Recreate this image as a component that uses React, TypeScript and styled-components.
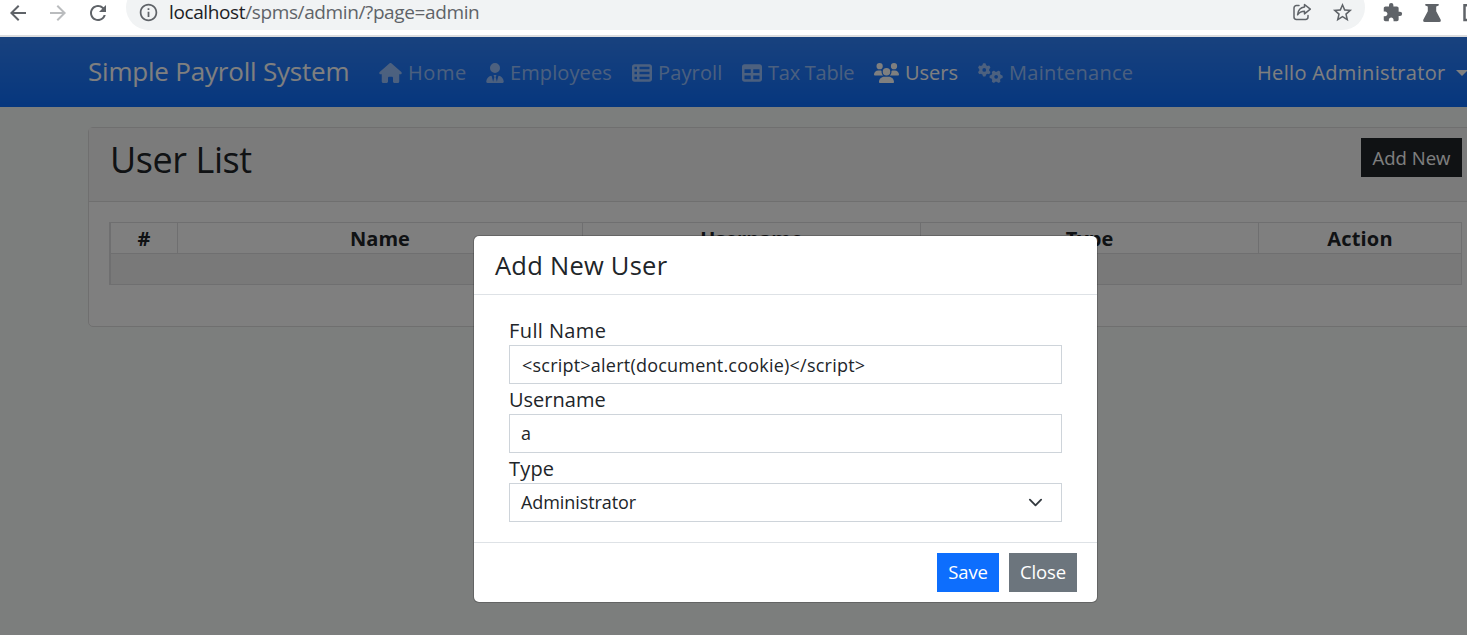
import React from "react";
import styled, { createGlobalStyle } from "styled-components";
import { FaHouse, FaUserTie, FaTableList, FaTable, FaUsers, FaGears } from "react-icons/fa6";
import { MdArrowBack, MdArrowForward, MdRefresh, MdInfoOutline, MdStarBorder, MdExtension } from "react-icons/md";

const Global = createGlobalStyle`
  * { box-sizing: border-box; }
  body { margin: 0; background: #fff; overflow: hidden; }
  body, input, button { font-family: "Open Sans", "Noto Sans", sans-serif; }
`;

const Screen = styled.div`
  width: 1467px;
  height: 635px;
  display: flex;
  flex-direction: column;
  overflow: hidden;
  color: #212529;
`;

const Text = styled.span<{ $ls?: number }>`
  letter-spacing: ${(p) => p.$ls ?? 0}px;
  white-space: nowrap;
`;

const BrowserBar = styled.header`
  height: 37px;
  flex: none;
  display: flex;
  align-items: flex-start;
  background: #fff;
  border-bottom: 2px solid #dcdddf;
  color: #5f6368;
`;

const BarIcon = styled.span<{ $gap: number; $top?: number; $dim?: boolean }>`
  display: flex;
  flex: none;
  margin-left: ${(p) => p.$gap}px;
  padding-top: ${(p) => p.$top ?? 1}px;
  color: ${(p) => (p.$dim ? "#babcbe" : "#5f6368")};
`;

const AddressBar = styled.div`
  flex: none;
  width: 1239px;
  height: 45px;
  margin: -15px 0 0 16px;
  padding: 15px 11px 0 11px;
  display: flex;
  align-items: flex-start;
  border-radius: 23px;
  background: #f1f3f4;
`;

const Url = styled.div`
  flex: 1;
  padding-left: 10px;
  font-size: 19px;
  line-height: 25px;
  b { font-weight: 400; color: #202124; }
`;

const Page = styled.div`
  position: relative;
  flex: 1;
  background: #f8fcfa;
`;

const Navbar = styled.nav`
  height: 70px;
  display: flex;
  align-items: center;
  padding-left: 88px;
  background: #0d6efd linear-gradient(180deg, rgba(255, 255, 255, 0.15), rgba(255, 255, 255, 0));
  font-size: 20px;
`;

const Brand = styled.div`
  width: 291px;
  padding-bottom: 2px;
  font-size: 26px;
  color: #fff;
`;

const NavItem = styled.a<{ $w: number; $icon: number; $active?: boolean }>`
  width: ${(p) => p.$w}px;
  flex: none;
  margin-right: 20px;
  padding-top: 2px;
  display: flex;
  align-items: center;
  gap: 6px;
  color: ${(p) => (p.$active ? "#fff" : "rgba(255, 255, 255, 0.55)")};
  svg { height: 20px; width: ${(p) => p.$icon}px; flex: none; }
  span { margin-top: -2px; }
`;

const Account = styled.div`
  margin-left: auto;
  padding-top: 2px;
  width: 210px;
  flex: none;
  display: flex;
  align-items: center;
  gap: 10px;
  color: #fff;
  span { margin-top: -2px; }
`;

const Caret = styled.i`
  flex: none;
  border: 6px solid transparent;
  border-top-color: #fff;
  border-bottom: 0;
`;

const Card = styled.section`
  margin: 20px 0 0 88px;
  width: 1395px;
  height: 200px;
  border: 1px solid #dfdfdf;
  border-radius: 5px;
  background: #fff;
`;

const CardHeader = styled.div`
  height: 74px;
  display: flex;
  justify-content: space-between;
  align-items: flex-start;
  padding: 10px 20px 0 21px;
  background: #f7f7f7;
  border-bottom: 1px solid #dfdfdf;
`;

const CardTitle = styled.h3`
  margin: 0;
  font-size: 36px;
  font-weight: 400;
  line-height: 44px;
`;

const Button = styled.button<{ $w: number; $bg: string; $line?: number }>`
  width: ${(p) => p.$w}px;
  height: 39px;
  padding: 0;
  display: flex;
  justify-content: center;
  align-items: flex-start;
  border: 0;
  background: ${(p) => p.$bg};
  color: #fff;
  font-size: 18.5px;
  line-height: ${(p) => p.$line ?? 39}px;
`;

const Table = styled.table`
  margin: 20px 0 0 20px;
  width: 1353px;
  table-layout: fixed;
  border-collapse: separate;
  border-spacing: 0;
  border: solid #dfdfe0;
  border-width: 1px 0 0 2px;
  th, td { height: 31px; padding: 0; border-bottom: 1px solid #dfdfe0; }
  th { padding-top: 2px; border-right: 1px solid #dfdfe0; font-size: 20px; line-height: 28px; }
  td { background: #f2f2f2; border-right: 1px solid #dfdfe0; }
`;

const Backdrop = styled.div`
  position: absolute;
  inset: 0;
  background: rgba(0, 0, 0, 0.5);
`;

const Modal = styled.div`
  position: absolute;
  left: 473px;
  top: 198px;
  width: 625px;
  height: 368px;
  display: flex;
  flex-direction: column;
  background: #fff;
  background-clip: padding-box;
  border: 1px solid rgba(0, 0, 0, 0.2);
  border-radius: 6px;
`;

const ModalHeader = styled.div`
  height: 59px;
  padding-left: 21px;
  border-bottom: 1px solid #dee2e6;
  font-size: 25.5px;
  line-height: 59px;
`;

const ModalBody = styled.form`
  height: 247px;
  padding: 20px 35px 0;
`;

const Label = styled.label`
  display: block;
  height: 30px;
  font-size: 20px;
  line-height: 31px;
`;

const Control = styled.div<{ $pad?: number; $lift?: number }>`
  height: 39px;
  padding: 0 18px ${(p) => p.$lift ?? 0}px ${(p) => p.$pad ?? 11}px;
  display: flex;
  align-items: center;
  justify-content: space-between;
  border: 1px solid #ced4da;
  font-size: 18px;
`;

const ModalFooter = styled.div`
  flex: 1;
  display: flex;
  justify-content: flex-end;
  gap: 10px;
  padding: 10px 20px 0;
  border-top: 1px solid #dee2e6;
`;

const columns: [string, number, number][] = [
  ["#", 67, 0],
  ["Name", 405, 0],
  ["Username", 338, 0],
  ["Type", 338, 0],
  ["Action", 203, 0.2],
];

const nav = [
  { label: "Home", icon: <FaHouse />, w: 87, iw: 23, ls: 0.6 },
  { label: "Employees", icon: <FaUserTie />, w: 126, iw: 18, ls: 0.1 },
  { label: "Payroll", icon: <FaTableList />, w: 90, iw: 20, ls: 0.15 },
  { label: "Tax Table", icon: <FaTable />, w: 112, iw: 20, ls: -0.25 },
  { label: "Users", icon: <FaUsers />, w: 84, iw: 25, ls: 0 },
  { label: "Maintenance", icon: <FaGears />, w: 155, iw: 25, ls: 0.28 },
];

const ShareIcon = () => (
  <svg width="20" height="20" viewBox="0 0 20 20" fill="none" stroke="currentColor" strokeWidth="1.5" strokeLinejoin="round" strokeLinecap="round">
    <path d="M7 3.500H4.400A2.400 2.400 0 0 0 2 5.900V15.100A2.400 2.400 0 0 0 4.400 17.500H13.600A2.400 2.400 0 0 0 16 15.100V13.500" />
    <path d="M12.500 2.500 18.300 7.200 12.500 11.900V9.300C9.500 9.300 7.300 10.400 5.600 12.800 6 8.800 8.500 5.500 12.500 5.100Z" />
  </svg>
);

const FlaskIcon = () => (
  <svg width="18" height="19" viewBox="0 0 18 19" fill="currentColor">
    <path d="M2.300 0H15.700V1.600L13.200 2.400V7.200L17.600 15.500Q18.400 18 16.200 18H1.800Q-.4 18 .4 15.500L4.800 7.200V2.400L2.300 1.600Z" />
  </svg>
);

export default function App() {
  return (
    <Screen>
      <Global />
      <BrowserBar>
        <BarIcon $gap={6}><MdArrowBack size={24} /></BarIcon>
        <BarIcon $gap={16} $dim><MdArrowForward size={24} /></BarIcon>
        <BarIcon $gap={16}><MdRefresh size={24} /></BarIcon>
        <AddressBar>
          <BarIcon $gap={1} $top={2}><MdInfoOutline size={21} /></BarIcon>
          <Url><Text $ls={-0.38}><b>localhost</b>/spms/admin/?page=admin</Text></Url>
          <BarIcon $gap={0} $top={2}><ShareIcon /></BarIcon>
          <BarIcon $gap={19}><MdStarBorder size={23} /></BarIcon>
        </AddressBar>
        <BarIcon $gap={17} $top={2}><MdExtension size={21} /></BarIcon>
        <BarIcon $gap={20} $top={4}><FlaskIcon /></BarIcon>
        <BarIcon $gap={22}>
          <svg width="10" height="21" fill="none" stroke="currentColor" strokeWidth="2.500"><path d="M12 4.200H1.500V19H12" /></svg>
        </BarIcon>
      </BrowserBar>
      <Page>
        <Navbar>
          <Brand><Text $ls={-0.2}>Simple Payroll System</Text></Brand>
          {nav.map((n) => (
            <NavItem key={n.label} $w={n.w} $icon={n.iw} $active={n.label === "Users"}>
              {n.icon}
              <Text $ls={n.ls}>{n.label}</Text>
            </NavItem>
          ))}
          <Account><Text $ls={0.33}>Hello Administrator</Text><Caret /></Account>
        </Navbar>
        <Card>
          <CardHeader>
            <CardTitle><Text $ls={-0.42}>User List</Text></CardTitle>
            <Button $w={101} $bg="#212529"><Text>Add New</Text></Button>
          </CardHeader>
          <Table>
            <colgroup>{columns.map(([c, w]) => <col key={c} width={w} />)}</colgroup>
            <thead><tr>{columns.map(([c, , ls]) => <th key={c}><Text $ls={ls}>{c}</Text></th>)}</tr></thead>
            <tbody><tr><td colSpan={5} /></tr></tbody>
          </Table>
        </Card>
        <Backdrop />
        <Modal>
          <ModalHeader><Text $ls={0.25}>Add New User</Text></ModalHeader>
          <ModalBody>
            <Label><Text $ls={0.4}>Full Name</Text></Label>
            <Control $pad={12}><Text $ls={0.22}>{"<script>alert(document.cookie)</script>"}</Text></Control>
            <Label><Text>Username</Text></Label>
            <Control $lift={2}><Text>a</Text></Control>
            <Label><Text $ls={0.2}>Type</Text></Label>
            <Control $lift={1}>
              <Text $ls={-0.08}>Administrator</Text>
              <svg width="15" height="15" viewBox="0 0 16 16" fill="none" stroke="#343a40" strokeWidth="2" strokeLinecap="round" strokeLinejoin="round"><path d="m2 5 6 6 6-6" /></svg>
            </Control>
          </ModalBody>
          <ModalFooter>
            <Button $w={62} $bg="#0d6efd" $line={37}><Text $ls={-0.1}>Save</Text></Button>
            <Button $w={68} $bg="#6c757d" $line={37}><Text $ls={-0.1}>Close</Text></Button>
          </ModalFooter>
        </Modal>
      </Page>
    </Screen>
  );
}
